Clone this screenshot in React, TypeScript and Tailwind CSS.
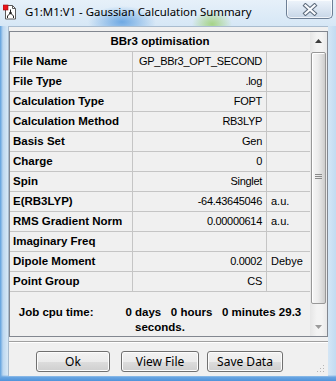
import React from 'react';

// 요약 테이블 행 데이터
type SummaryRow = {
  label: string;
  value: string;
  unit: string;
};

const rows: SummaryRow[] = [
  { label: 'File Name', value: 'GP_BBr3_OPT_SECOND', unit: '' },
  { label: 'File Type', value: '.log', unit: '' },
  { label: 'Calculation Type', value: 'FOPT', unit: '' },
  { label: 'Calculation Method', value: 'RB3LYP', unit: '' },
  { label: 'Basis Set', value: 'Gen', unit: '' },
  { label: 'Charge', value: '0', unit: '' },
  { label: 'Spin', value: 'Singlet', unit: '' },
  { label: 'E(RB3LYP)', value: '-64.43645046', unit: 'a.u.' },
  { label: 'RMS Gradient Norm', value: '0.00000614', unit: 'a.u.' },
  { label: 'Imaginary Freq', value: '', unit: '' },
  { label: 'Dipole Moment', value: '0.0002', unit: 'Debye' },
  { label: 'Point Group', value: 'CS', unit: '' },
];

const buttons = [
  { text: 'Ok', width: 'w-[74px]', gap: 'ml-[27px]' },
  { text: 'View File', width: 'w-[78px]', gap: 'ml-[11px]' },
  { text: 'Save Data', width: 'w-[76px]', gap: 'ml-[8px]' },
];

const AppIcon: React.FC = () => (
  <svg width="14" height="16" viewBox="0 0 14 16">
    <path d="M2.5 1.5h7l3 3v10.5h-10z" fill="#fff" stroke="#5a5a5a" />
    <path d="M9.5 1.5v3h3" fill="none" stroke="#5a5a5a" />
    <circle cx="7.5" cy="9" r="1.3" fill="#222" />
    <path d="M7.5 9V5.5M7.5 9l-3 3M7.5 9l3 3M4.5 12v2M10.5 12v2" stroke="#222" strokeWidth="1" />
    <rect x="0" y="1" width="5" height="5" fill="#e8141b" stroke="#9a0d10" strokeWidth="0.6" />
  </svg>
);

const CloseButton: React.FC = () => (
  <div className="w-[47px] h-[19px] rounded-b-[5px] border border-t-0 border-[#6d7f95] bg-[linear-gradient(180deg,#eef4fb_0%,#dbe6f2_50%,#c7d6e7_100%)] flex items-center justify-center shadow-[inset_0_0_0_1px_rgba(255,255,255,0.7)]">
    <svg width="16" height="13" viewBox="0 0 16 13">
      <path d="M3.5 2.5l9 8M12.5 2.5l-9 8" stroke="#5d6b7c" strokeWidth="4.2" strokeLinecap="square" />
      <path d="M3.5 2.5l9 8M12.5 2.5l-9 8" stroke="#fafcff" strokeWidth="2.2" strokeLinecap="square" />
    </svg>
  </div>
);

const ScrollBar: React.FC = () => (
  <div className="w-[17px] flex flex-col bg-[linear-gradient(90deg,#e6e6e6,#f3f3f3_40%,#f3f3f3_70%,#e9e9e9)]">
    {/* 위쪽 화살표 */}
    <div className="h-[18px] flex items-center justify-center">
      <svg width="7" height="4" viewBox="0 0 7 4">
        <path d="M0 4L3.5 0L7 4z" fill="#3c3c3c" />
      </svg>
    </div>
    <div className="h-[2px]" />
    {/* 스크롤 썸 */}
    <div className="mx-[1px] h-[252px] rounded-[2px] border border-[#989898] bg-[linear-gradient(90deg,#f6f6f6,#ececec_45%,#dcdcdc_75%,#cdcdcd)] shadow-[inset_1px_1px_0_#fff] flex items-center justify-center">
      <div className="flex flex-col gap-[1px] mt-[-4px]">
        <div className="w-[7px] h-[1px] bg-[#8a8a8a]" />
        <div className="w-[7px] h-[1px] bg-[#8a8a8a]" />
        <div className="w-[7px] h-[1px] bg-[#8a8a8a]" />
      </div>
    </div>
    <div className="flex-1" />
    {/* 아래쪽 화살표 */}
    <div className="h-[18px] flex items-center justify-center">
      <svg width="7" height="4" viewBox="0 0 7 4">
        <path d="M0 0L3.5 4L7 0z" fill="#9a9a9a" />
      </svg>
    </div>
  </div>
);

const App: React.FC = () => {
  return (
    <div className="relative w-[336px] h-[381px] overflow-hidden bg-[linear-gradient(180deg,transparent_0px,transparent_375px,#6aa6e2_377px,#4f93da_381px),linear-gradient(90deg,#5d9fdd_0px,#bcd7f0_3px,#d7e8f6_8px,#d4e6f5_328px,#c2dbf1_336px)]">
      {/* 타이틀 바 */}
      <div className="h-[26px] flex items-start bg-[radial-gradient(34px_16px_at_122px_22px,#6fa9e3,transparent),radial-gradient(20px_14px_at_212px_24px,#a6d488,transparent),linear-gradient(180deg,#e6f0f9,#d6e7f6)]">
        <div className="ml-[3px] mt-[4px]">
          <AppIcon />
        </div>
        <span className="ml-[8px] mt-[4px] text-[11.4px] leading-[16px] text-black font-['Segoe_UI','Noto_Sans',sans-serif]">
          G1:M1:V1 - Gaussian Calculation Summary
        </span>
        <div className="ml-auto mr-[3px]">
          <CloseButton />
        </div>
      </div>

      {/* 클라이언트 영역 */}
      <div className="ml-[8px] w-[320px] h-[350px] bg-[#f0f0f0] border-l border-t border-[#a9bccf] font-['Liberation_Sans',Arial,sans-serif] text-[11px] text-black">
        <div className="mt-[4px] w-[319px] border border-[#828790] flex">
          <div className="flex-1 flex flex-col">
            <div className="h-[20px] border-b border-[#c5c5c5] flex items-center justify-center font-bold text-[11.5px]">
              BBr3 optimisation
            </div>
            {rows.map((row) => (
              <div key={row.label} className="h-[20px] border-b border-[#c5c5c5] flex">
                <div className="w-[123px] border-r border-[#c5c5c5] pl-[3px] flex items-center font-bold text-[11.5px] whitespace-nowrap">
                  {row.label}
                </div>
                <div className="w-[134px] border-r border-[#c5c5c5] pr-[4px] flex items-center justify-end tracking-[-0.3px] whitespace-nowrap">
                  {row.value}
                </div>
                <div className="flex-1 pl-[4px] flex items-center whitespace-nowrap">{row.unit}</div>
              </div>
            ))}
            {/* 작업 시간 */}
            <div className="h-[44px] pt-[13px] text-center font-bold text-[11.5px] leading-[15px] whitespace-pre">
              {'Job cpu time:          0 days   0 hours   0 minutes 29.3\nseconds.'}
            </div>
          </div>
          <ScrollBar />
        </div>

        {/* 구분선 */}
        <div className="mt-[4px] w-[319px] h-[2px] border-t border-[#a0a0a0] border-b border-b-white" />

        {/* 버튼 */}
        <div className="mt-[8px] flex font-['Segoe_UI','Noto_Sans',sans-serif] text-[12px]">
          {buttons.map((b) => (
            <button
              key={b.text}
              className={`${b.width} ${b.gap} h-[21px] rounded-[3px] border border-[#707070] bg-[linear-gradient(180deg,#f2f2f2_0%,#ebebeb_50%,#dddddd_51%,#cfcfcf_100%)] shadow-[inset_0_0_0_1px_#fcfcfc] flex items-center justify-center leading-none`}
            >
              {b.text}
            </button>
          ))}
        </div>
      </div>

      {/* 크기 조절 그립 */}
      <svg className="absolute left-[316px] top-[364px]" width="9" height="9" viewBox="0 0 9 9">
        <rect x="7" y="1" width="1" height="1" fill="#b5b5b5" />
        <rect x="4" y="4" width="1" height="1" fill="#b5b5b5" />
        <rect x="7" y="4" width="1" height="1" fill="#b5b5b5" />
        <rect x="1" y="7" width="1" height="1" fill="#b5b5b5" />
        <rect x="4" y="7" width="1" height="1" fill="#b5b5b5" />
        <rect x="7" y="7" width="1" height="1" fill="#b5b5b5" />
      </svg>
    </div>
  );
};

export default App;
